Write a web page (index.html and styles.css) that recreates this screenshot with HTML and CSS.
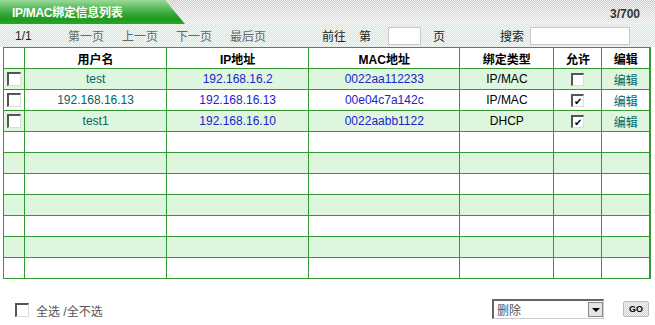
FILE: index.html
```html
<!DOCTYPE html>
<html lang="zh-CN">
<head>
  <meta charset="UTF-8" />
  <title>IP/MAC绑定信息列表</title>
  <link rel="stylesheet" href="styles.css">
</head>
<body>
  <div class="title-bar">
    <div class="title-tab">IP/MAC绑定信息列表</div>
    <div class="count">3/700</div>
  </div>

  <div class="toolbar">
    <span class="pages">1/1</span>
    <span class="nav">第一页</span>
    <span class="nav">上一页</span>
    <span class="nav">下一页</span>
    <span class="nav">最后页</span>
    <span class="goto">前往</span>
    <span class="di">第</span>
    <input type="text" class="page-input" />
    <span class="ye">页</span>
    <span class="search">搜索</span>
    <input type="text" class="search-input" />
  </div>

  <table class="list">
    <colgroup>
      <col class="c-check"><col class="c-wide"><col class="c-wide"><col class="c-mac"><col class="c-type"><col class="c-small"><col class="c-small">
    </colgroup>
    <tr class="head">
      <th></th><th>用户名</th><th>IP地址</th><th>MAC地址</th><th>绑定类型</th><th>允许</th><th>编辑</th>
    </tr>
    <tr class="alt">
      <td><span class="box"></span></td><td class="user">test</td><td class="ip">192.168.16.2</td><td class="mac">0022aa112233</td><td>IP/MAC</td><td><span class="box small"></span></td><td class="edit">编辑</td>
    </tr>
    <tr>
      <td><span class="box"></span></td><td class="user">192.168.16.13</td><td class="ip">192.168.16.13</td><td class="mac">00e04c7a142c</td><td>IP/MAC</td><td><span class="box small checked">✔</span></td><td class="edit">编辑</td>
    </tr>
    <tr class="alt">
      <td><span class="box"></span></td><td class="user">test1</td><td class="ip">192.168.16.10</td><td class="mac">0022aabb1122</td><td>DHCP</td><td><span class="box small checked">✔</span></td><td class="edit">编辑</td>
    </tr>
    <tr><td></td><td></td><td></td><td></td><td></td><td></td><td></td></tr>
    <tr class="alt"><td></td><td></td><td></td><td></td><td></td><td></td><td></td></tr>
    <tr><td></td><td></td><td></td><td></td><td></td><td></td><td></td></tr>
    <tr class="alt"><td></td><td></td><td></td><td></td><td></td><td></td><td></td></tr>
    <tr><td></td><td></td><td></td><td></td><td></td><td></td><td></td></tr>
    <tr class="alt"><td></td><td></td><td></td><td></td><td></td><td></td><td></td></tr>
    <tr><td></td><td></td><td></td><td></td><td></td><td></td><td></td></tr>
  </table>

  <div class="footer">
    <div class="select-all">
      <span class="box"></span>
      <span>全选 /全不选</span>
    </div>
    <div class="actions">
      <div class="select">
        <span class="select-text">删除</span>
        <span class="select-arrow"></span>
      </div>
      <div class="go">GO</div>
    </div>
  </div>
</body>
</html>
```

FILE: styles.css
```css
body {
  margin: 0;
  width: 655px;
  height: 325px;
  background: #fff;
  font-family: "Liberation Sans", "Noto Sans CJK SC", sans-serif;
  font-size: 12px;
  color: #000;
  overflow: hidden;
}

.title-bar {
  height: 24px;
  display: flex;
  justify-content: space-between;
  align-items: center;
  background-color: #dadada;
  background-image:
    linear-gradient(rgba(255, 255, 255, 0) 0%, rgba(255, 255, 255, 0.55) 100%),
    repeating-conic-gradient(#c4c4c4 0 25%, #f4f4f4 0 50%);
  background-size: 100% 100%, 2px 2px;
}

.title-tab {
  width: 173px;
  height: 24px;
  padding-left: 12px;
  line-height: 26px;
  color: #fff;
  font-weight: bold;
  font-size: 12px;
  letter-spacing: -0.3px;
  background: linear-gradient(#9ad99a 0%, #6cc46c 25%, #3aa83a 55%, #1e9a1e 80%, #22aa22 100%);
  clip-path: polygon(0 0, 165px 0, 185px 24px, 0 24px);
}

.count {
  padding-right: 15px;
  padding-top: 4px;
  font-weight: bold;
  color: #333;
}

.toolbar {
  height: 23px;
  display: flex;
  align-items: center;
  color: #666;
  background-color: #dff3ea;
  background-image: repeating-conic-gradient(#c4ead8 0 25%, #f6fcf8 0 50%);
  background-size: 2px 2px;
}

.pages {
  color: #222;
  margin-left: 15px;
  width: 53px;
}

.nav {
  width: 54px;
}

.goto {
  margin-left: 38px;
  color: #222;
}

.di {
  margin-left: 13px;
  color: #222;
}

.page-input {
  width: 33px;
  height: 18px;
  margin: 0 0 0 17px;
  padding: 0;
  border: 1px solid #c8c8c8;
  background: #fff;
  box-sizing: border-box;
}

.ye {
  margin-left: 12px;
  color: #222;
}

.search {
  margin-left: 55px;
  color: #222;
}

.search-input {
  width: 100px;
  height: 18px;
  margin: 0 0 0 6px;
  padding: 0;
  border: 1px solid #c8c8c8;
  background: #fff;
  box-sizing: border-box;
}

.list {
  margin-left: 3px;
  width: 648px;
  border-collapse: collapse;
  table-layout: fixed;
  border-right: 2px solid #339933;
}

.c-check { width: 21px; }
.c-wide { width: 142px; }
.c-mac { width: 151px; }
.c-type { width: 94px; }
.c-small { width: 48px; }

.list th,
.list td {
  height: 20px;
  padding: 0;
  border: 1px solid #339933;
  text-align: center;
  vertical-align: middle;
  white-space: nowrap;
}

.list th {
  font-weight: bold;
  color: #000;
}

.list tr.alt td {
  background-color: #dcf5dc;
  background-image: repeating-conic-gradient(#c6efc6 0 25%, #f5fcf5 0 50%);
  background-size: 2px 2px;
}

.list td:first-child {
  text-align: left;
  padding-left: 3px;
}

.user {
  color: #006666;
}

.ip,
.mac {
  color: #2222cc;
}

.edit {
  color: #006666;
}

.box {
  display: inline-block;
  width: 11px;
  height: 11px;
  border-top: 2px solid #555;
  border-left: 2px solid #555;
  border-right: 1px solid #ddd;
  border-bottom: 1px solid #ddd;
  background: #fff;
  vertical-align: middle;
  font-size: 10px;
  line-height: 11px;
  text-align: center;
  color: #000;
}

.box.small {
  width: 10px;
  height: 10px;
  line-height: 11px;
}

.footer {
  display: flex;
  justify-content: space-between;
  align-items: center;
  margin-top: 20px;
  padding: 0 6px 0 15px;
}

.select-all {
  display: flex;
  align-items: center;
  gap: 7px;
  color: #555;
  margin-top: 2px;
}

.actions {
  display: flex;
  align-items: center;
  gap: 19px;
}

.select {
  width: 112px;
  height: 20px;
  box-sizing: border-box;
  border-top: 2px solid #666;
  border-left: 2px solid #666;
  border-right: 1px solid #ccc;
  border-bottom: 1px solid #ccc;
  display: flex;
  align-items: center;
  justify-content: space-between;
  background: #fff;
}

.select-text {
  padding-left: 3px;
  color: #555;
}

.select-arrow {
  width: 15px;
  height: 15px;
  box-sizing: border-box;
  border: 1px solid #888;
  background: #e4e4e4;
  position: relative;
}

.select-arrow::after {
  content: "";
  position: absolute;
  left: 3px;
  top: 5px;
  border-left: 4px solid transparent;
  border-right: 4px solid transparent;
  border-top: 4px solid #000;
}

.go {
  width: 26px;
  height: 16px;
  box-sizing: border-box;
  border: 1px solid #bbb;
  border-radius: 2px;
  background-color: #e4e4e4;
  background-image: repeating-conic-gradient(#d4d4d4 0 25%, #f4f4f4 0 50%);
  background-size: 2px 2px;
  font-size: 9px;
  font-weight: bold;
  line-height: 14px;
  text-align: center;
  color: #000;
}
```
